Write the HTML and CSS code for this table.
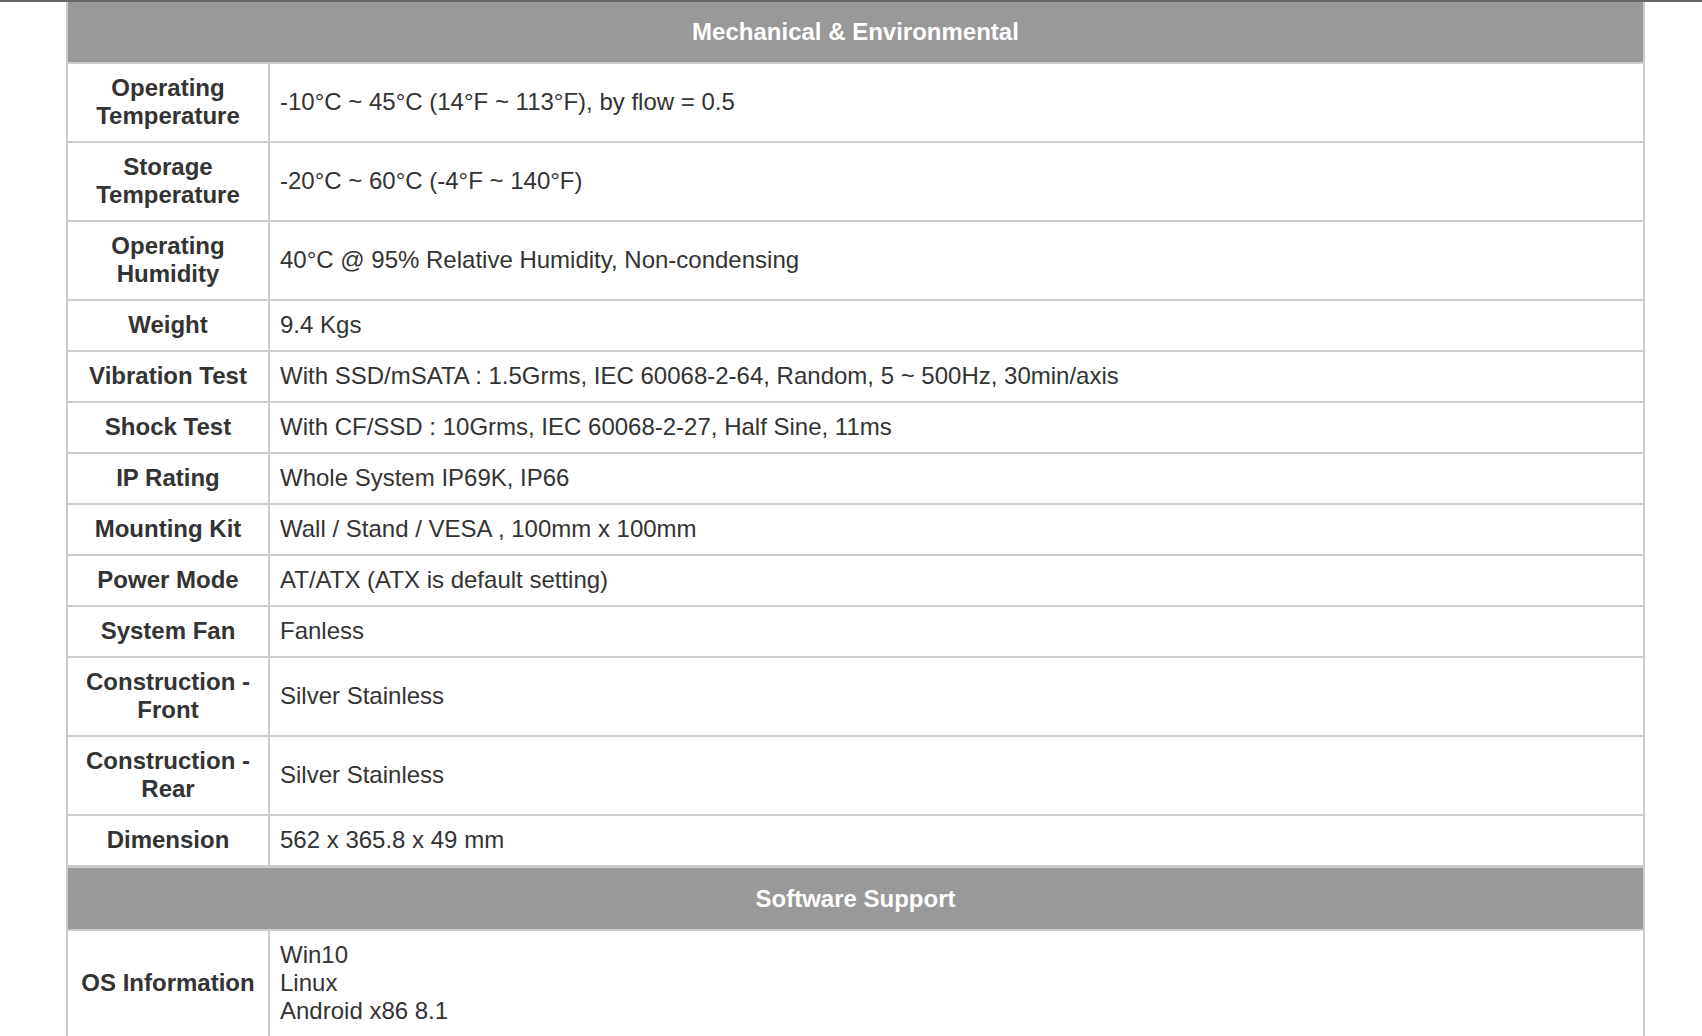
FILE: index.html
```html
<!DOCTYPE html>
<html>
<head>
<meta charset="utf-8">
<link rel="stylesheet" href="styles.css">
</head>
<body>
<div class="topbar"></div>
<table class="spec">
  <colgroup>
    <col class="col-label">
    <col class="col-value">
  </colgroup>
  <tbody>
    <tr><th colspan="2" class="section first">Mechanical &amp; Environmental</th></tr>
    <tr><td class="label">Operating Temperature</td><td class="value">-10°C ~ 45°C (14°F ~ 113°F), by flow = 0.5</td></tr>
    <tr><td class="label">Storage Temperature</td><td class="value">-20°C ~ 60°C (-4°F ~ 140°F)</td></tr>
    <tr><td class="label">Operating Humidity</td><td class="value">40°C @ 95% Relative Humidity, Non-condensing</td></tr>
    <tr><td class="label">Weight</td><td class="value">9.4 Kgs</td></tr>
    <tr><td class="label">Vibration Test</td><td class="value">With SSD/mSATA : 1.5Grms, IEC 60068-2-64, Random, 5 ~ 500Hz, 30min/axis</td></tr>
    <tr><td class="label">Shock Test</td><td class="value">With CF/SSD : 10Grms, IEC 60068-2-27, Half Sine, 11ms</td></tr>
    <tr><td class="label">IP Rating</td><td class="value">Whole System IP69K, IP66</td></tr>
    <tr><td class="label">Mounting Kit</td><td class="value">Wall / Stand / VESA , 100mm x 100mm</td></tr>
    <tr><td class="label">Power Mode</td><td class="value">AT/ATX (ATX is default setting)</td></tr>
    <tr><td class="label">System Fan</td><td class="value">Fanless</td></tr>
    <tr><td class="label">Construction - Front</td><td class="value">Silver Stainless</td></tr>
    <tr><td class="label">Construction - Rear</td><td class="value">Silver Stainless</td></tr>
    <tr><td class="label">Dimension</td><td class="value">562 x 365.8 x 49 mm</td></tr>
    <tr><th colspan="2" class="section second">Software Support</th></tr>
    <tr><td class="label">OS Information</td><td class="value">Win10<br>Linux<br>Android x86 8.1</td></tr>
  </tbody>
</table>
</body>
</html>
```
FILE: styles.css
```css
html, body {
  margin: 0;
  padding: 0;
  background: #ffffff;
}
body {
  font-family: "Liberation Sans", Arial, Helvetica, sans-serif;
  color: #333333;
}
.topbar {
  height: 2px;
  background: #666666;
}
.spec {
  margin-left: 66px;
  width: 1579px;
  border-collapse: collapse;
  table-layout: fixed;
  font-size: 24px;
  line-height: 28px;
}
.col-label {
  width: 202px;
}
.spec td,
.spec th {
  border: 2px solid #cccccc;
}
.section {
  background: #999999;
  color: #ffffff;
  font-weight: bold;
  text-align: center;
  padding: 16px 10px;
}
.section.first {
  border-top: 0;
}
.section.second {
  border-top-width: 3px;
  padding: 17px 10px 16px;
}
.label {
  padding: 10px 8px 11px;
  font-weight: bold;
  text-align: center;
  vertical-align: middle;
}
.value {
  padding: 10px 10px 11px;
  text-align: left;
  vertical-align: middle;
}
```
